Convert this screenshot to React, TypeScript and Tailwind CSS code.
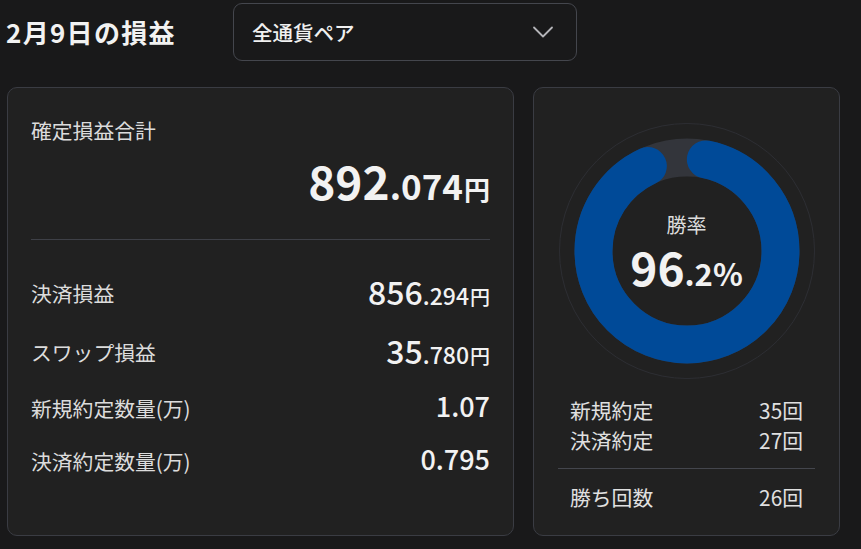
import { ChevronDown } from "lucide-react";

const rows = [
  { label: "決済損益", int: "856", dec: ".294", unit: "円", h: "h-[59px]" },
  { label: "スワップ損益", int: "35", dec: ".780", unit: "円", h: "h-[59px]" },
  { label: "新規約定数量(万)", plain: "1.07", h: "h-[53px]" },
  { label: "決済約定数量(万)", plain: "0.795", h: "h-[53px]" },
];

const counts = [
  { label: "新規約定", value: "35" },
  { label: "決済約定", value: "27" },
];

function WinRateDonut({ rate }: { rate: number }) {
  const r = 93.5;
  const c = 2 * Math.PI * r;
  const cap = 19;
  const len = c * (rate / 100) - cap * 2;
  return (
    <svg width="256" height="256" viewBox="0 0 256 256" className="block">
      <circle cx="128" cy="128" r="127.5" fill="none" stroke="#2d2e33" strokeWidth="1" />
      <circle cx="128" cy="128" r={r} fill="none" stroke="#33353b" strokeWidth="38" />
      <circle
        cx="128"
        cy="128"
        r={r}
        fill="none"
        stroke="#004a98"
        strokeWidth="38"
        strokeLinecap="round"
        strokeDasharray={`${len} ${c}`}
        strokeDashoffset={-cap}
        transform="rotate(-90 128 128)"
      />
    </svg>
  );
}

export default function App() {
  return (
    <div className="w-[861px] h-[549px] overflow-hidden bg-[#19191a] text-[#f2f2f2] font-['Noto_Sans_CJK_JP',sans-serif]">
      <div className="flex items-center h-[58px] mt-[3px] pl-[6px]">
        <h1 className="w-[227px] text-[26px] font-bold tracking-[0.05em] leading-none">2月9日の損益</h1>
        <button className="flex items-center justify-between w-[344px] h-[58px] rounded-[9px] border border-[#44464d] pl-[18px] pr-[15px] text-[20.5px] font-medium text-[#f0f0f0]">
          <span>全通貨ペア</span>
          <ChevronDown size={36} strokeWidth={1.2} className="text-[#b4b4b8]" />
        </button>
      </div>

      <div className="flex gap-[19px] pl-[7px] mt-[26px]">
        <section className="w-[507px] h-[449px] rounded-[10px] border border-[#3a3c43] bg-[#212121] px-[23px]">
          <p className="pt-[27px] text-[20.8px] leading-[30px] text-[#dcdcdc]">確定損益合計</p>
          <div className="mt-[12px] flex justify-end">
            <span className="flex items-baseline leading-none font-bold">
              <span className="text-[46px]">892</span>
              <span className="text-[35px]">.074</span>
              <span className="text-[26px] ml-[1px]">円</span>
            </span>
          </div>
          <div className="mt-[36px] h-px bg-[#3e4047]" />
          <div className="mt-[23px]">
            {rows.map((row) => (
              <div key={row.label} className={`flex items-center justify-between ${row.h}`}>
                <span className="text-[20.8px] leading-[30px] text-[#dcdcdc]">{row.label}</span>
                {row.plain ? (
                  <span className="text-[27px] leading-none font-medium mb-[4px]">{row.plain}</span>
                ) : (
                  <span className="flex items-baseline leading-none font-medium mb-[4px]">
                    <span className="text-[32px]">{row.int}</span>
                    <span className="text-[23px]">{row.dec}</span>
                    <span className="text-[20px] ml-[1px]">{row.unit}</span>
                  </span>
                )}
              </div>
            ))}
          </div>
        </section>

        <section className="w-[307px] h-[449px] rounded-[10px] border border-[#3a3c43] bg-[#212121]">
          <div className="relative mx-auto mt-[35px] w-[256px] h-[256px]">
            <WinRateDonut rate={96.2} />
            <div className="absolute inset-0 flex flex-col items-center pt-[88px]">
              <span className="text-[20px] leading-[28px] text-[#dcdcdc]">勝率</span>
              <span className="flex items-baseline font-bold leading-none mt-[4px]">
                <span className="text-[46px]">96</span>
                <span className="text-[31px]">.2%</span>
              </span>
            </div>
          </div>
          <div className="mt-[16px] px-[36px]">
            {counts.map((c) => (
              <div key={c.label} className="flex justify-between text-[20.8px] leading-[30px] text-[#e0e0e0]">
                <span>{c.label}</span>
                <span>{c.value}回</span>
              </div>
            ))}
          </div>
          <div className="mx-[24px] mt-[13px] h-px bg-[#44464d]" />
          <div className="mt-[13px] px-[36px] flex justify-between text-[20.8px] leading-[30px] text-[#e0e0e0]">
            <span>勝ち回数</span>
            <span>26回</span>
          </div>
        </section>
      </div>
    </div>
  );
}
